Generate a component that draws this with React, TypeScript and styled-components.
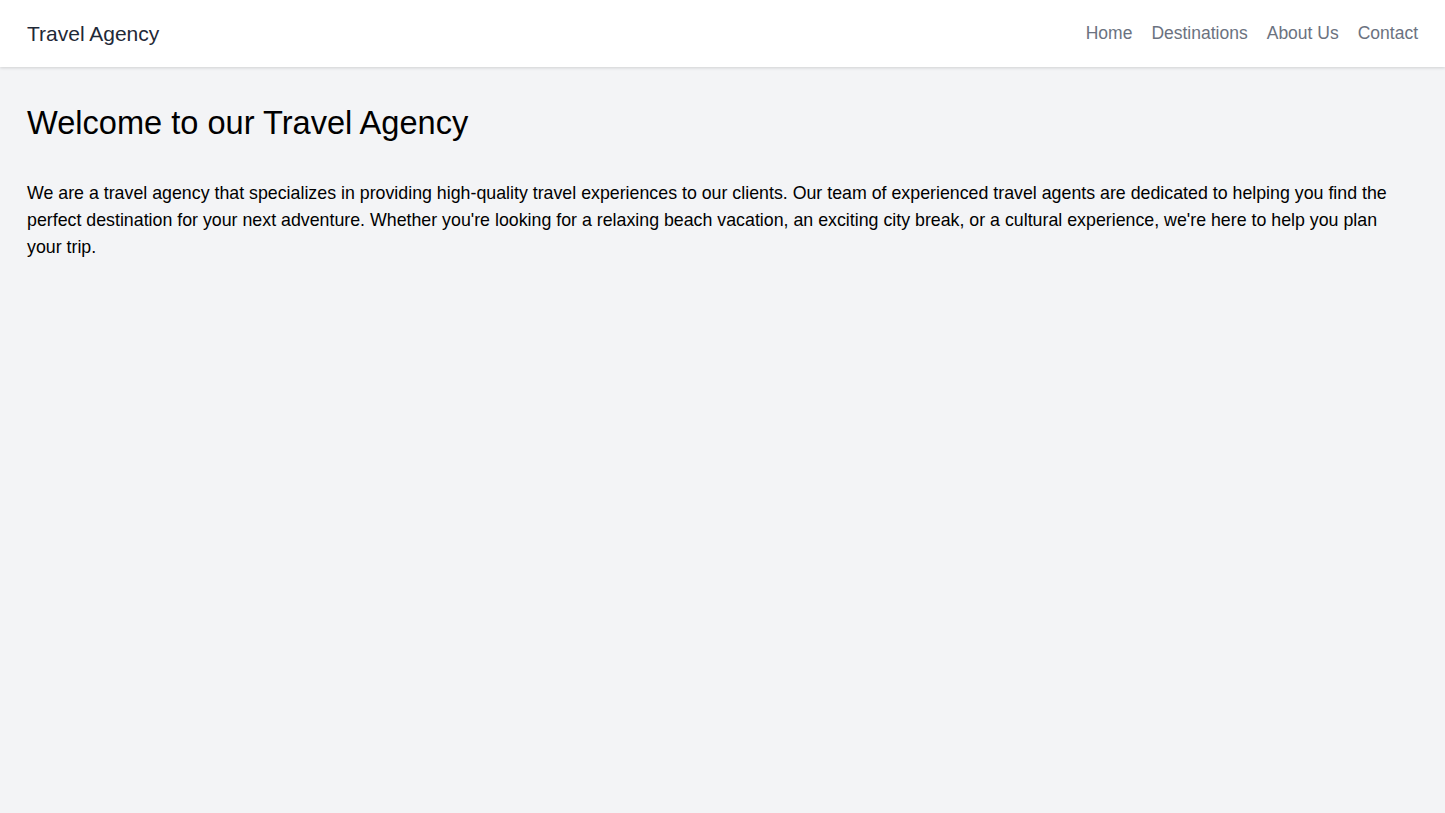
import React from "react";
import styled, { createGlobalStyle } from "styled-components";

const GlobalStyle = createGlobalStyle`
  html, body {
    margin: 0;
    padding: 0;
    background: #f3f4f6;
    font-family: "Liberation Sans", Arial, sans-serif;
  }
  #root {
    min-height: 100vh;
  }
`;

const Header = styled.header`
  background: #ffffff;
  box-shadow: 0 1px 3px rgba(0, 0, 0, 0.15);
  height: 67px;
  padding: 0 27px;
  display: flex;
  align-items: center;
  justify-content: space-between;
`;

const Brand = styled.div`
  font-size: 21px;
  color: #1f2937;
`;

const Nav = styled.nav`
  display: flex;
  gap: 19px;
`;

const NavLink = styled.a`
  font-size: 17.5px;
  color: #6b7280;
  text-decoration: none;
`;

const Main = styled.main`
  padding: 32px 27px;
`;

const Title = styled.h1`
  margin: 0 0 33px;
  font-size: 32.6px;
  font-weight: 400;
  line-height: 48px;
  color: #000;
`;

const Text = styled.p`
  margin: 0;
  max-width: 1372px;
  font-size: 17.8px;
  line-height: 27px;
  color: #000;
`;

const links = ["Home", "Destinations", "About Us", "Contact"];

const App = () => {
  return (
    <>
      <GlobalStyle />
      <Header>
        <Brand>Travel Agency</Brand>
        <Nav>
          {links.map((l) => (
            <NavLink key={l} href="#">{l}</NavLink>
          ))}
        </Nav>
      </Header>
      <Main>
        <Title>Welcome to our Travel Agency</Title>
        <Text>
          We are a travel agency that specializes in providing high-quality travel experiences to our clients. Our team of experienced travel agents are dedicated to helping you find the perfect destination for your next adventure. Whether you're looking for a relaxing beach vacation, an exciting city break, or a cultural experience, we're here to help you plan your trip.
        </Text>
      </Main>
    </>
  );
};

export default App;
